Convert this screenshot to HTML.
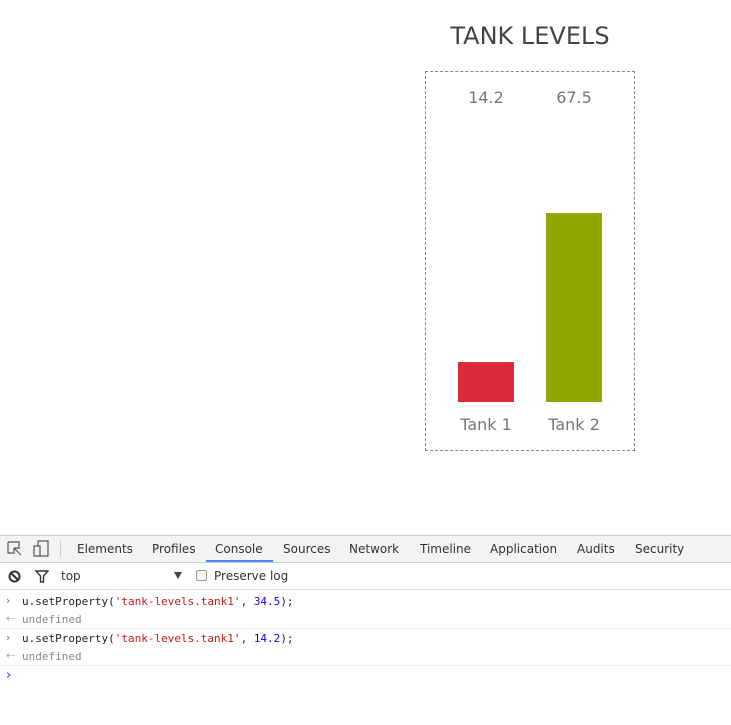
<html><head><style>
body{margin:0;width:731px;height:725px;background:#fff;position:relative;overflow:hidden;font-family:"DejaVu Sans","Liberation Sans",sans-serif}
.a{position:absolute}
.t{font-size:12px;color:#333;top:542px}
.m{font-family:"DejaVu Sans Mono","Liberation Mono",monospace;font-size:11px;left:22px}
.s{color:#c41a16}.n{color:#1c00cf}
.ic{color:#777;font-size:11px;left:6px}
</style></head><body>
<div class="a" style="left:425px;width:210px;top:22px;text-align:center;font-size:24px;color:#444">TANK LEVELS</div>
<div class="a" style="left:425px;top:71px;width:208px;height:378px;border:1px dashed #888"></div>
<div class="a" style="left:446px;width:80px;top:88px;text-align:center;font-size:16px;color:#777">14.2</div>
<div class="a" style="left:534px;width:80px;top:88px;text-align:center;font-size:16px;color:#777">67.5</div>
<div class="a" style="left:458px;top:362px;width:56px;height:40px;background:#dc2a3a"></div>
<div class="a" style="left:546px;top:213px;width:56px;height:189px;background:#8fa700"></div>
<div class="a" style="left:446px;width:80px;top:415px;text-align:center;font-size:16px;color:#777">Tank 1</div>
<div class="a" style="left:534px;width:80px;top:415px;text-align:center;font-size:16px;color:#777">Tank 2</div>

<div class="a" style="left:0;top:535px;width:731px;height:26px;background:#f3f3f3;border-top:1px solid #ccc;border-bottom:1px solid #ccc"></div>
<svg class="a" style="left:7px;top:541px" width="16" height="16"><path d="M1 1h11v5M1 1v11h5M7 7l7 7M7 7v6M7 7h6" stroke="#555" fill="none" stroke-width="1.2"/></svg>
<svg class="a" style="left:33px;top:540px" width="18" height="18"><rect x="5" y="1" width="10" height="15" stroke="#555" fill="none" stroke-width="1.2"/><rect x="1" y="6" width="6" height="10" stroke="#555" fill="#f3f3f3" stroke-width="1.2"/></svg>
<div class="a" style="left:60px;top:541px;width:1px;height:16px;background:#ccc"></div>
<div class="a t" style="left:77px">Elements</div>
<div class="a t" style="left:152px">Profiles</div>
<div class="a t" style="left:215px">Console</div>
<div class="a" style="left:206px;top:560px;width:67px;height:2px;background:#4a8af4"></div>
<div class="a t" style="left:283px">Sources</div>
<div class="a t" style="left:349px">Network</div>
<div class="a t" style="left:420px">Timeline</div>
<div class="a t" style="left:490px">Application</div>
<div class="a t" style="left:577px">Audits</div>
<div class="a t" style="left:635px">Security</div>

<div class="a" style="left:0;top:589px;width:731px;height:1px;background:#ddd"></div>
<svg class="a" style="left:8px;top:570px" width="13" height="13"><circle cx="6.5" cy="6.5" r="5" stroke="#333" stroke-width="2" fill="none"/><path d="M3 3l7 7" stroke="#333" stroke-width="2"/></svg>
<svg class="a" style="left:35px;top:570px" width="14" height="13"><path d="M1 1h12l-4.5 5v6h-3v-6z" stroke="#333" stroke-width="1.4" fill="none"/></svg>
<div class="a" style="left:61px;top:569px;font-size:12px;color:#333">top</div>
<div class="a" style="left:174px;top:572px;width:0;height:0;border-left:4px solid transparent;border-right:4px solid transparent;border-top:7px solid #444"></div>
<div class="a" style="left:196px;top:570px;width:9px;height:9px;border:1px solid #999;border-radius:2px;background:#f8f8f8"></div>
<div class="a" style="left:214px;top:569px;font-size:12px;color:#333">Preserve log</div>

<div class="a ic" style="top:594px">›</div>
<div class="a m" style="top:595px;color:#222">u.setProperty(<span class="s">'tank-levels.tank1'</span>, <span class="n">34.5</span>);</div>
<div class="a ic" style="top:612px;color:#aaa">⇠</div>
<div class="a m" style="top:613px;color:#888">undefined</div>
<div class="a" style="left:0;top:628px;width:731px;height:1px;background:#eee"></div>
<div class="a ic" style="top:631px">›</div>
<div class="a m" style="top:632px;color:#222">u.setProperty(<span class="s">'tank-levels.tank1'</span>, <span class="n">14.2</span>);</div>
<div class="a ic" style="top:649px;color:#aaa">⇠</div>
<div class="a m" style="top:650px;color:#888">undefined</div>
<div class="a" style="left:0;top:665px;width:731px;height:1px;background:#eee"></div>
<div class="a ic" style="top:668px;color:#367cf1;font-weight:bold;font-size:13px">›</div>
</body></html>
